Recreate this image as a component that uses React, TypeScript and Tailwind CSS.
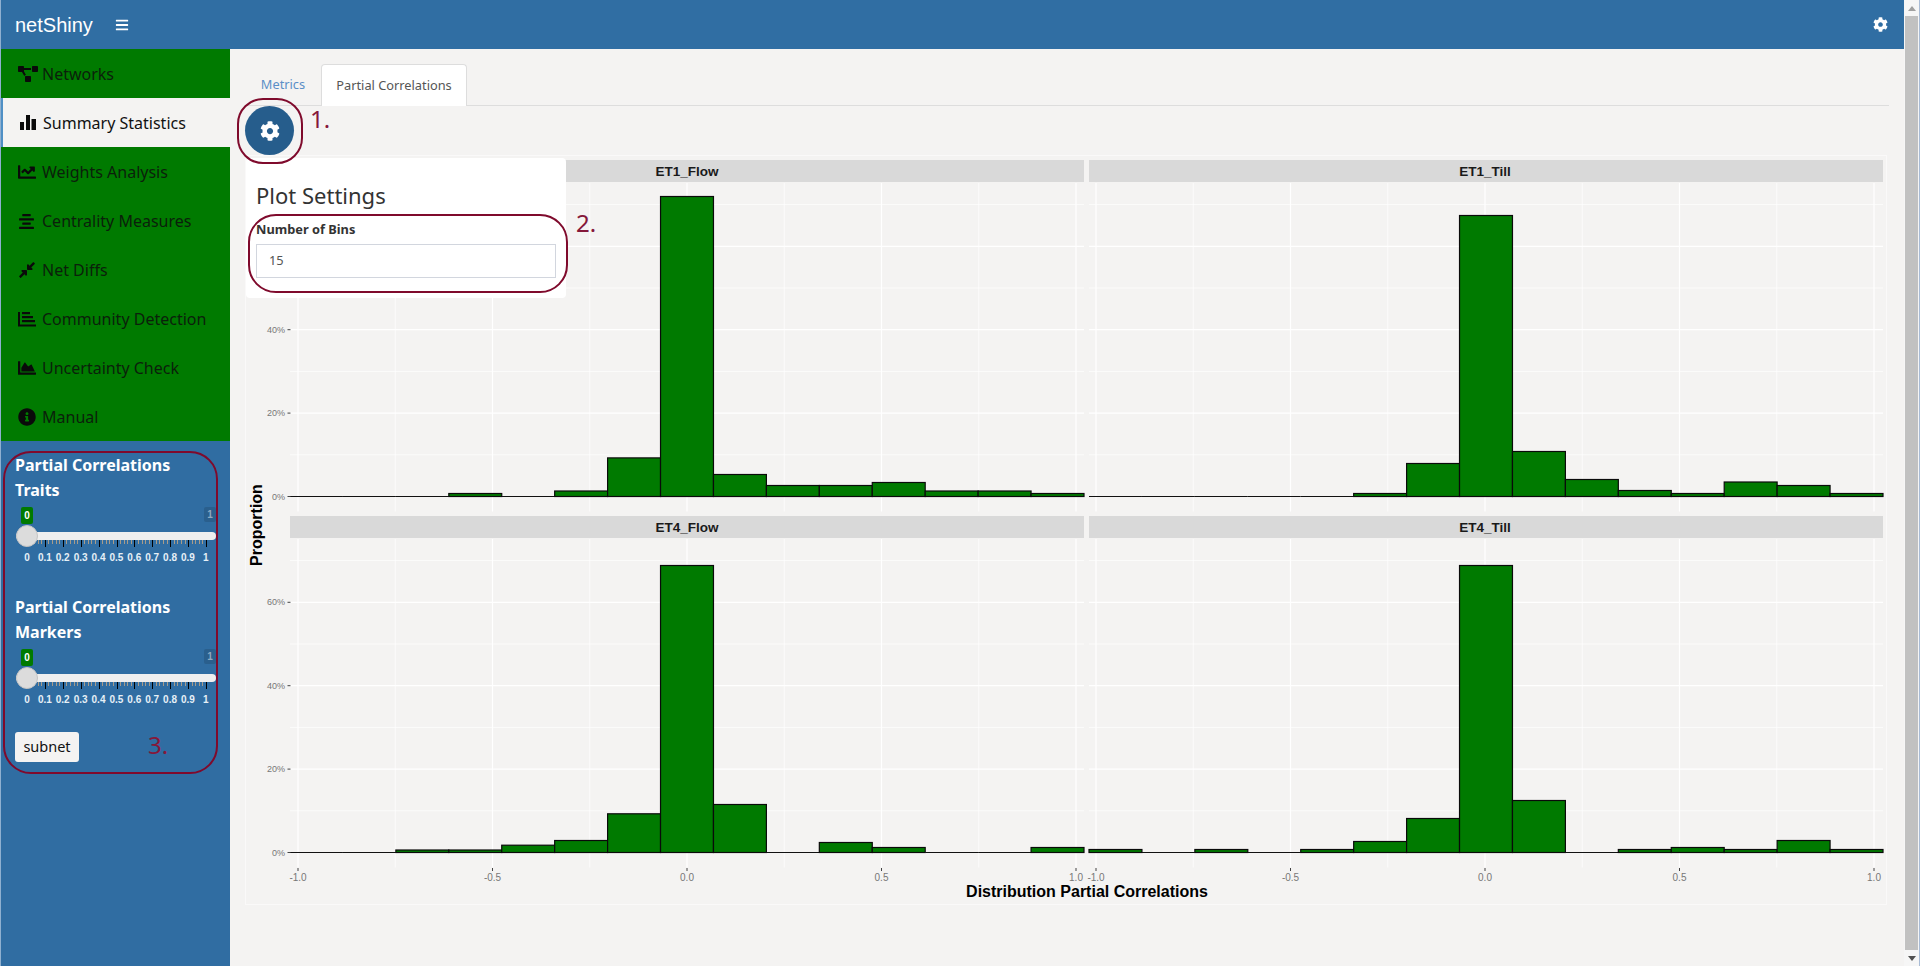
import { FaAlignCenter, FaBars, FaChartArea, FaChartLine, FaCog, FaCompressAlt, FaInfoCircle, FaProjectDiagram } from "react-icons/fa";
import type { ReactNode } from "react";

const uiFont = "font-['Noto_Sans',sans-serif]";
const plotFont = "'Liberation Sans', Arial, sans-serif";

function SignalIcon() {
  return (
    <svg width="18" height="18" viewBox="0 0 18 18" fill="currentColor">
      <rect x="1" y="8" width="4" height="8" />
      <rect x="7" y="1" width="4" height="15" />
      <rect x="12.5" y="5" width="4.5" height="11" />
    </svg>
  );
}

function AxisBarsIcon() {
  return (
    <svg width="18" height="18" viewBox="0 0 18 18" fill="currentColor">
      <path d="M0 2h2v12.5h16V16.500H0z" />
      <rect x="4" y="2" width="8" height="2.200" />
      <rect x="4" y="6" width="11" height="2.200" />
      <rect x="4" y="10" width="13" height="2.200" />
    </svg>
  );
}

const navItems: { label: string; icon: ReactNode; active?: boolean }[] = [
  { label: "Networks", icon: <FaProjectDiagram size={20} /> },
  { label: "Summary Statistics", icon: <SignalIcon />, active: true },
  { label: "Weights Analysis", icon: <FaChartLine size={18} /> },
  { label: "Centrality Measures", icon: <FaAlignCenter size={17} /> },
  { label: "Net Diffs", icon: <FaCompressAlt size={18} /> },
  { label: "Community Detection", icon: <AxisBarsIcon /> },
  { label: "Uncertainty Check", icon: <FaChartArea size={18} /> },
  { label: "Manual", icon: <FaInfoCircle size={18} /> },
];

const sliderLabels = ["0", "0.1", "0.2", "0.3", "0.4", "0.5", "0.6", "0.7", "0.8", "0.9", "1"];

function Slider({ title, sub }: { title: string; sub: string }) {
  const majors = sliderLabels.map((_, i) => 11 + i * 17.9);
  const minors: number[] = [];
  majors.slice(0, -1).forEach((m) => {
    [1, 2, 3, 4].forEach((k) => minors.push(m + (k * 17.9) / 5));
  });
  return (
    <div className="pl-[15px] w-[215px]">
      <p className="text-[16px] leading-[25px] font-bold text-white -ml-px">{title}</p>
      <p className="text-[16px] leading-[25px] font-bold text-white -ml-px">{sub}</p>
      <div className="relative h-[66px] w-[200px] mt-[4px]">
        <span className="absolute left-[5px] top-0 w-[12px] h-[17px] rounded-[2px] bg-[#007a00] text-white text-[10px] font-bold text-center leading-[17px] font-['Liberation_Sans',sans-serif]">
          0
        </span>
        <span className="absolute left-[188px] top-0 w-[12px] h-[15px] rounded-[2px] bg-[#2a5f8d] text-[#8ea9c1] text-[10px] font-bold text-center leading-[15px] font-['Liberation_Sans',sans-serif]">
          1
        </span>
        <div className="absolute left-0 top-[25px] w-[200px] h-[8px] rounded-full bg-[#efefef]" />
        <svg className="absolute left-0 top-[33px]" width="200" height="8" shapeRendering="crispEdges">
          {minors.map((x) => (
            <line key={x} x1={Math.round(x) + 0.5} x2={Math.round(x) + 0.5} y1="0" y2="4" stroke="#a89c8a" />
          ))}
          {majors.map((x) => (
            <line key={x} x1={Math.round(x) + 0.5} x2={Math.round(x) + 0.5} y1="0" y2="7" stroke="#000" />
          ))}
        </svg>
        <div className="absolute left-0 top-[18px] w-[22px] h-[22px] rounded-full bg-[#dcdcdc] border border-[#c4c4c4]" />
        <div className="absolute left-[2px] top-[45px] flex font-['Liberation_Sans',sans-serif]">
          {sliderLabels.map((t) => (
            <span key={t} className="w-[17.9px] text-center text-[10px] font-bold leading-[12px] text-[#e6f0f7]">
              {t}
            </span>
          ))}
        </div>
      </div>
    </div>
  );
}

function Sidebar() {
  return (
    <aside className="w-[229px] shrink-0 bg-[#306da2] flex flex-col">
      {navItems.map((item) => (
        <div
          key={item.label}
          className={`h-[49px] pt-[1px] flex items-center text-[16px] ${
            item.active
              ? "bg-[#f4f3f2] text-[#111] border-l-[2px] border-[#4f8fc5] pl-[16px]"
              : "bg-[#007a00] text-[#0b1f0b] pl-[17px]"
          }`}
        >
          <span className="w-[24px] text-[#0a0a0a] flex items-center">{item.icon}</span>
          {item.label}
        </div>
      ))}
      <div className="pt-[12px] flex flex-col gap-[21.500px]">
        <Slider title="Partial Correlations" sub="Traits" />
        <Slider title="Partial Correlations" sub="Markers" />
      </div>
      <button className="ml-[14px] mt-[17px] w-[64px] h-[30px] rounded-[3px] bg-[#f4f3f2] text-[14.500px] text-[#111]">
        subnet
      </button>
    </aside>
  );
}

// histogram bar heights in pixels, 15 bins per panel
const panels = [
  { name: "ET1_Flow", x: 290, mid: 687, strip: 160, zero: 496.5, bars: [0, 0, 0, 3, 0, 5.5, 38.6, 300, 22, 11, 11, 14, 5.5, 5.5, 3] },
  { name: "ET1_Till", x: 1089, mid: 1485, strip: 160, zero: 496.5, bars: [0, 0, 0, 0, 0, 3, 33, 281, 45, 17, 6, 3, 14.5, 11, 3] },
  { name: "ET4_Flow", x: 290, mid: 687, strip: 516, zero: 852.5, bars: [0, 0, 2.5, 2.5, 7.3, 12, 38.7, 287, 48, 0, 10, 5, 0, 0, 5] },
  { name: "ET4_Till", x: 1089, mid: 1485, strip: 516, zero: 852.5, bars: [3, 0, 3, 0, 3, 11, 34, 287, 52, 0, 3, 5, 3, 12, 3] },
];

const PANEL_W = 794;
const BIN = PANEL_W / 15;
const xTicks = [-1, -0.5, 0, 0.5, 1];

function Panel({ p, first, bottom }: { p: (typeof panels)[number]; first: boolean; bottom: boolean }) {
  const top = p.strip + 23;
  const end = p.zero + 15;
  const pct = [0, 20, 40, 60];
  const tickX = (v: number) => p.mid + v * 389;
  return (
    <g>
      <rect x={p.x} y={p.strip} width={PANEL_W} height={22} fill="#d9d9d9" />
      <text x={p.mid} y={p.strip + 16} textAnchor="middle" fontSize="13.500" fontWeight="700" fill="#1a1a1a" fontFamily={plotFont}>
        {p.name}
      </text>
      {[10, 30, 50, 70].map((v) => (
        <line key={v} x1={p.x} x2={p.x + PANEL_W} y1={p.zero - v * 4.17} y2={p.zero - v * 4.17} stroke="#fff" strokeWidth="0.7" />
      ))}
      {pct.map((v) => (
        <line key={v} x1={p.x} x2={p.x + PANEL_W} y1={p.zero - v * 4.17} y2={p.zero - v * 4.17} stroke="#fff" strokeWidth="1.200" />
      ))}
      {[-0.75, -0.25, 0.25, 0.75].map((v) => (
        <line key={v} x1={tickX(v)} x2={tickX(v)} y1={top} y2={end} stroke="#fff" strokeWidth="0.7" />
      ))}
      {xTicks.map((v) => (
        <line key={v} x1={tickX(v)} x2={tickX(v)} y1={top} y2={end} stroke="#fff" strokeWidth="1.200" />
      ))}
      {p.bars.map((h, i) =>
        h === 0 ? (
          <line key={i} x1={p.x + i * BIN} x2={p.x + (i + 1) * BIN} y1={p.zero} y2={p.zero} stroke="#111" strokeWidth="1.200" />
        ) : (
          <rect key={i} x={p.x + i * BIN} y={p.zero - h} width={BIN} height={h} fill="#007a00" stroke="#0a0a0a" strokeWidth="1.200" />
        ),
      )}
      {first &&
        pct.map((v) => (
          <g key={v} fontFamily={plotFont}>
            <text x={285} y={p.zero - v * 4.17 + 3} textAnchor="end" fontSize="9" fill="#777">
              {v}%
            </text>
            <line x1={287.5} x2={290.5} y1={p.zero - v * 4.17} y2={p.zero - v * 4.17} stroke="#444" />
          </g>
        ))}
      {bottom &&
        xTicks.map((v) => (
          <g key={v} fontFamily={plotFont}>
            <line x1={tickX(v)} x2={tickX(v)} y1={868} y2={871} stroke="#444" />
            <text x={tickX(v)} y={880.5} textAnchor="middle" fontSize="10" fill="#777">
              {v.toFixed(1)}
            </text>
          </g>
        ))}
    </g>
  );
}

function Chart() {
  return (
    <div className="ml-[15px] w-[1642px] h-[750px] border border-[#faf9f9]">
      <svg width="1640" height="748" viewBox="246 156 1640 748" className="block">
        {panels.map((p, i) => (
          <Panel key={p.name} p={p} first={i % 2 === 0} bottom={i > 1} />
        ))}
        <text x="1087" y="897" textAnchor="middle" fontSize="16" fontWeight="700" fill="#000" fontFamily={plotFont}>
          Distribution Partial Correlations
        </text>
        <text transform="translate(262 525) rotate(-90)" textAnchor="middle" fontSize="16" fontWeight="700" fill="#000" fontFamily={plotFont}>
          Proportion
        </text>
      </svg>
    </div>
  );
}

function Scrollbar() {
  return (
    <div className="w-[16px] shrink-0 h-full bg-[#f6f6f6] flex flex-col items-center border-r border-[#a9bcd6]">
      <div className="h-[16px] flex items-center justify-center">
        <span className="w-0 h-0 border-x-[4px] border-x-transparent border-b-[5px] border-b-[#a0a0a0]" />
      </div>
      <div className="w-[13px] flex-1 bg-[#c1c1c1]" />
      <div className="h-[16px] flex items-center justify-center">
        <span className="w-0 h-0 border-x-[4px] border-x-transparent border-t-[5px] border-t-[#505050]" />
      </div>
    </div>
  );
}

function Mark({ className }: { className: string }) {
  return <div className={`absolute border-2 border-[#7f0a2c] ${className}`} />;
}

function Num({ className, children }: { className: string; children: ReactNode }) {
  return <span className={`absolute text-[24px] leading-[30px] text-[#85183a] ${className}`}>{children}</span>;
}

export default function App() {
  return (
    <div className={`relative flex h-[966px] w-[1920px] overflow-hidden bg-[#f4f3f2] ${uiFont}`}>
      <div className="w-[1904px] flex flex-col border-l border-[#8fb0d0]">
        <header className="h-[49px] shrink-0 bg-[#306ea3] flex items-center text-white pl-[14px] pr-[16px]">
          <span className="text-[20px] font-['Liberation_Sans',sans-serif]">netShiny</span>
          <FaBars size={14} className="ml-[22px]" />
          <FaCog size={15} className="ml-auto" />
        </header>
        <div className="flex flex-1 min-h-0">
          <Sidebar />
          <main className="flex-1 pt-[15px]">
            <div className="ml-[15px] mr-[15px] h-[42px] flex border-b border-[#dddddd] text-[12.800px]">
              <div className="w-[76px] flex items-center justify-center text-[#5b8fc7]">Metrics</div>
              <div className="w-[146px] h-[42px] flex items-center justify-center bg-white border border-b-0 border-[#dddddd] rounded-t-[4px] text-[#555]">
                Partial Correlations
              </div>
            </div>
            <div className="h-[49px] ml-[15px]">
              <button className="w-[49px] h-[49px] rounded-full bg-[#265d8c] flex items-center justify-center text-white">
                <FaCog size={20} />
              </button>
            </div>
            <Chart />
          </main>
        </div>
      </div>
      <Scrollbar />

      {/* popover floats above the chart */}
      <div className="absolute left-[246px] top-[158px] w-[320px] h-[140px] bg-white rounded-[4px] px-[10px] pt-[23px]">
        <h3 className="text-[22px] leading-[28px] text-[#333]">Plot Settings</h3>
        <label className="block mt-[10px] text-[12.800px] leading-[20px] font-bold text-[#333]">Number of Bins</label>
        <div className="mt-[5px] w-[300px] h-[34px] border border-[#d2d6de] pl-[12px] flex items-center text-[12.800px] text-[#555]">15</div>
      </div>

      {/* hand-drawn annotations */}
      <Mark className="left-[237px] top-[98px] w-[66px] h-[66px] rounded-[26px]" />
      <Mark className="left-[248px] top-[214px] w-[320px] h-[79px] rounded-[28px]" />
      <Mark className="left-[3px] top-[451px] w-[215px] h-[323px] rounded-[28px]" />
      <Num className="left-[310px] top-[104px]">1.</Num>
      <Num className="left-[576px] top-[208px]">2.</Num>
      <Num className="left-[148px] top-[730px]">3.</Num>
    </div>
  );
}
